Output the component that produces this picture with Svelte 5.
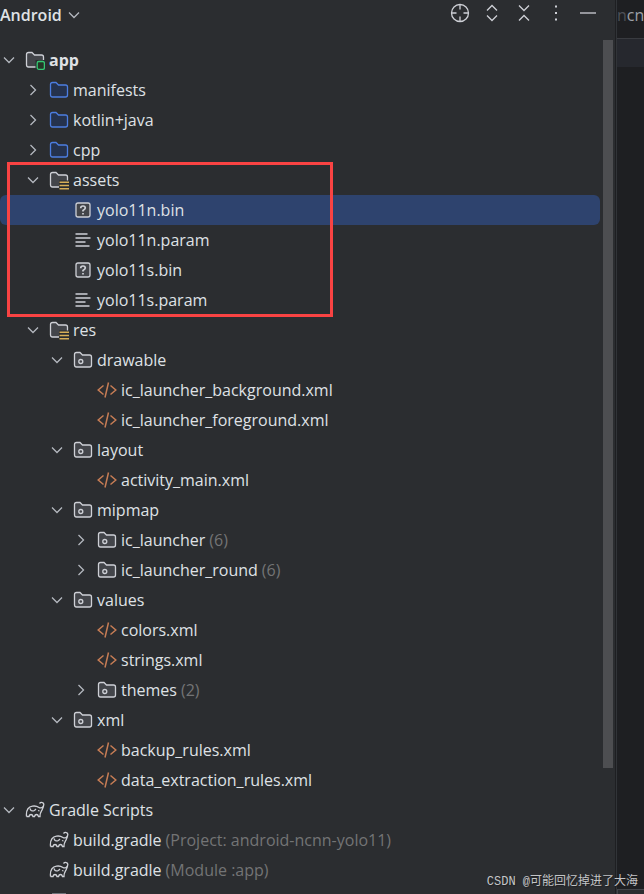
<script lang="ts">
    type Row = {
        label: string;
        depth: number;
        icon: string;
        open?: boolean;
        note?: string;
        bold?: boolean;
    };

    const actions = [
        { name: "Select opened file", icon: "target" },
        { name: "Expand all", icon: "expand" },
        { name: "Collapse all", icon: "collapse" },
        { name: "Options", icon: "more" },
        { name: "Hide", icon: "hide" },
    ];

    const before: Row[] = [
        { label: "app", depth: 0, icon: "module", open: true, bold: true },
        { label: "manifests", depth: 1, icon: "source", open: false },
        { label: "kotlin+java", depth: 1, icon: "source", open: false },
        { label: "cpp", depth: 1, icon: "source", open: false },
    ];

    const assets: Row[] = [
        { label: "assets", depth: 1, icon: "resources", open: true },
        { label: "yolo11n.bin", depth: 2, icon: "unknown" },
        { label: "yolo11n.param", depth: 2, icon: "text" },
        { label: "yolo11s.bin", depth: 2, icon: "unknown" },
        { label: "yolo11s.param", depth: 2, icon: "text" },
    ];

    const after: Row[] = [
        { label: "res", depth: 1, icon: "resources", open: true },
        { label: "drawable", depth: 2, icon: "package", open: true },
        { label: "ic_launcher_background.xml", depth: 3, icon: "xml" },
        { label: "ic_launcher_foreground.xml", depth: 3, icon: "xml" },
        { label: "layout", depth: 2, icon: "package", open: true },
        { label: "activity_main.xml", depth: 3, icon: "xml" },
        { label: "mipmap", depth: 2, icon: "package", open: true },
        { label: "ic_launcher", depth: 3, icon: "package", open: false, note: "(6)" },
        { label: "ic_launcher_round", depth: 3, icon: "package", open: false, note: "(6)" },
        { label: "values", depth: 2, icon: "package", open: true },
        { label: "colors.xml", depth: 3, icon: "xml" },
        { label: "strings.xml", depth: 3, icon: "xml" },
        { label: "themes", depth: 3, icon: "package", open: false, note: "(2)" },
        { label: "xml", depth: 2, icon: "package", open: true },
        { label: "backup_rules.xml", depth: 3, icon: "xml" },
        { label: "data_extraction_rules.xml", depth: 3, icon: "xml" },
        { label: "Gradle Scripts", depth: 0, icon: "gradle", open: true },
        { label: "build.gradle", depth: 1, icon: "gradle", note: "(Project: android-ncnn-yolo11)" },
        { label: "build.gradle", depth: 1, icon: "gradle", note: "(Module :app)" },
    ];

    let selected = $state("yolo11n.bin");
</script>

{#snippet folder(kind: string)}
    <path class="folder {kind}" d="M1.5 4.5Q1.5 2.5 3.5 2.5H7L9.5 5H16.5Q18.5 5 18.5 7V15Q18.5 17 16.5 17H3.5Q1.5 17 1.5 15Z" />
{/snippet}

{#snippet glyph(name: string)}
    <svg class="icon" viewBox="0 0 20 20" aria-hidden="true">
        {#if name === "module"}
            {@render folder("plain")}
            <rect class="mask" x="10.5" y="10" width="9.5" height="10" />
            <rect class="badge" x="12.2" y="11.5" width="7.2" height="7.8" rx="1.5" />
        {:else if name === "source"}
            {@render folder("source")}
        {:else if name === "resources"}
            {@render folder("plain")}
            <rect class="mask" x="10" y="10.5" width="10" height="9.5" />
            <path class="gold" d="M10.5 12.3h9.5M10.5 15.5h9.5M10.5 18.7h9.5" />
        {:else if name === "package"}
            {@render folder("plain")}
            <circle class="line" cx="7.8" cy="11.5" r="2" />
        {:else if name === "unknown"}
            <rect class="folder plain" x="3" y="3" width="14" height="14" rx="2" />
            <path class="line bold" d="M7.7 8.2Q7.7 6 10 6T12.3 8.1Q12.3 9.2 10 10.6V11.5M10 13v1.5" />
        {:else if name === "text"}
            <path class="line" d="M2.5 4h12M2.5 8h15M2.5 12h10M2.5 16h14" />
        {:else if name === "xml"}
            <path class="orange" d="M6.5 5.5 1.2 10l5.3 4.5M13.5 5.5l5.3 4.5-5.3 4.5M11.5 2.5 8 17.5" />
        {:else if name === "gradle"}
            <path class="line" d="M1.5 16.5C1 11 3 7 7.5 6.2C10 5.7 12 6.2 14 7.5C16 8.8 18.5 7 18.8 4.5C19 2.5 16 1.6 14.5 3.5M1.5 16.5H4Q4.5 14.5 6 14.5T8 16.5H9.5Q10 14.5 11.5 14.5T13.5 16.5H15C14.8 13 16 12 17.3 9.5Q18.5 7.5 18.8 4.5M5 8.5Q6 12 9.5 10.5L11 9M13 10.5l1.5 .5" />
        {:else if name === "target"}
            <circle class="line" cx="10" cy="10" r="8.5" />
            <path class="line" d="M10 1.5v5M10 13.5v5M1.5 10h5M13.5 10h5" />
        {:else if name === "expand"}
            <path class="line" d="m5 7.5 5-5 5 5M5 12.5l5 5 5-5" />
        {:else if name === "collapse"}
            <path class="line" d="m5 2.5 5 5 5-5M5 17.5l5-5 5 5" />
        {:else if name === "more"}
            <path class="dots" d="M9 2.5h2v2H9zM9 9h2v2H9zM9 15.5h2v2H9z" />
        {:else if name === "hide"}
            <path class="line" d="M2 10h16" />
        {/if}
    </svg>
{/snippet}

{#snippet chevron(open: boolean)}
    <svg class="chevron" class:open viewBox="0 0 16 16" aria-hidden="true">
        <path d="M5.5 3 10.5 8l-5 5" />
    </svg>
{/snippet}

{#snippet rows(list: Row[])}
    {#each list as row}
        <button
            class="row depth-{row.depth}"
            class:selected={row.label === selected}
            role="treeitem"
            aria-selected={row.label === selected}
            aria-expanded={row.open}
            onclick={() => (selected = row.label)}
        >
            <span class="arrow">
                {#if row.open !== undefined}
                    {@render chevron(row.open)}
                {/if}
            </span>
            {@render glyph(row.icon)}
            <span class="label" class:strong={row.bold}>{row.label}</span>
            {#if row.note}
                <span class="note">{row.note}</span>
            {/if}
        </button>
    {/each}
{/snippet}

<div class="window">
    <section class="panel">
        <header>
            <button class="view">
                Android
                {@render chevron(true)}
            </button>
            <div class="actions">
                {#each actions as action}
                    <button class="action" aria-label={action.name}>
                        {@render glyph(action.icon)}
                    </button>
                {/each}
            </div>
        </header>
        <div class="body">
            <div class="tree" role="tree" aria-label="Project files">
                {@render rows(before)}
                <div class="group" role="group">
                    {@render rows(assets)}
                    <div class="highlight"></div>
                </div>
                {@render rows(after)}
                <div class="next"></div>
            </div>
            <div class="scroll"><div class="thumb"></div></div>
        </div>
    </section>
    <aside class="editor">
        <div class="tab"><span class="faded">n</span>cnn</div>
        <div class="line-current"></div>
        <div class="blank"></div>
        <div class="dock"></div>
    </aside>
    <div class="watermark">CSDN @可能回忆掉进了大海</div>
</div>

<style>
    :global(body) {
        margin: 0;
        background: #2b2d30;
    }

    .window {
        position: relative;
        display: flex;
        height: 100vh;
        overflow: hidden;
        background: #2b2d30;
        color: #dfe1e5;
        font: 16px/30px "Open Sans", "Noto Sans", sans-serif;
    }

    .panel {
        display: flex;
        flex: 1;
        flex-direction: column;
        min-width: 0;
        border-right: 1px solid #1e1f22;
    }

    button {
        padding: 0;
        border: 0;
        background: none;
        color: inherit;
        font: inherit;
        text-align: left;
    }

    header {
        display: flex;
        flex: none;
        align-items: flex-start;
        justify-content: space-between;
        height: 40px;
        padding-right: 17px;
    }

    .view {
        display: flex;
        align-items: center;
        gap: 4px;
        font-weight: 600;
    }

    .actions {
        display: flex;
        gap: 12px;
        padding-top: 3px;
    }

    .action {
        display: flex;
    }

    .body {
        display: flex;
        flex: 1;
        min-height: 0;
    }

    .tree {
        flex: 1;
        min-width: 0;
        padding: 5px 3px 0 0;
        overflow: hidden;
    }

    .row {
        display: flex;
        align-items: center;
        width: 100%;
        height: 30px;
        border-radius: 6px;
        white-space: nowrap;
    }

    .depth-1 {
        padding-left: 24px;
    }

    .depth-2 {
        padding-left: 48px;
    }

    .depth-3 {
        padding-left: 72px;
    }

    .selected {
        background: #2e436e;
    }

    .arrow {
        display: flex;
        width: 25px;
        padding-left: 1px;
        box-sizing: border-box;
    }

    .icon {
        flex: none;
        width: 20px;
        height: 20px;
    }

    .chevron {
        width: 16px;
        height: 16px;
        fill: none;
        stroke: #b4b8bf;
        stroke-width: 1.3;
    }

    .chevron.open {
        transform: rotate(90deg);
    }

    .label {
        padding-left: 4px;
    }

    .strong {
        font-weight: 700;
    }

    .note {
        padding-left: 4px;
        color: #737475;
    }

    .group {
        position: relative;
    }

    .highlight {
        position: absolute;
        top: -3px;
        left: 7px;
        width: 320px;
        height: 149px;
        border: 3px solid #f94343;
        pointer-events: none;
    }

    .next {
        width: 14px;
        height: 2px;
        margin: 8px 0 0 52px;
        background: #6f737a;
    }

    .scroll {
        width: 12px;
    }

    .thumb {
        width: 10px;
        height: 728px;
        background: #4d4e51;
    }

    .editor {
        display: flex;
        flex-direction: column;
        width: 28px;
        box-sizing: border-box;
        border-left: 1px solid #313438;
        background: #1e1f22;
        overflow: hidden;
    }

    .tab {
        height: 38px;
        border-bottom: 1px solid #393b40;
        color: #9da0a8;
    }

    .faded {
        color: #4d5057;
    }

    .line-current {
        height: 28px;
        background: #26282e;
    }

    .blank {
        flex: 1;
    }

    .dock {
        height: 4px;
        border-top: 1px solid #43454a;
        border-left: 1px solid #43454a;
        background: #2b2d30;
    }

    .watermark {
        position: absolute;
        right: 6px;
        bottom: 3px;
        color: #c4c5c7;
        font: 12px/18px "Liberation Mono", "Noto Sans CJK SC", monospace;
        text-shadow: 1px 1px 1px #1e1f22;
    }

    .folder {
        stroke-width: 1.3;
    }

    .plain {
        fill: #43454a;
        stroke: #ced0d6;
    }

    .source {
        fill: #25324d;
        stroke: #4c7de0;
    }

    .mask {
        fill: #2b2d30;
    }

    .badge {
        fill: #253627;
        stroke: #35c873;
        stroke-width: 1.3;
    }

    .line,
    .gold,
    .orange {
        fill: none;
        stroke: #ced0d6;
        stroke-width: 1.3;
    }

    .bold {
        stroke-width: 1.7;
    }

    .gold {
        stroke: #d6ae58;
        stroke-width: 1.5;
    }

    .orange {
        stroke: #c77d55;
        stroke-width: 1.5;
    }

    .dots {
        fill: #ced0d6;
    }
</style>
